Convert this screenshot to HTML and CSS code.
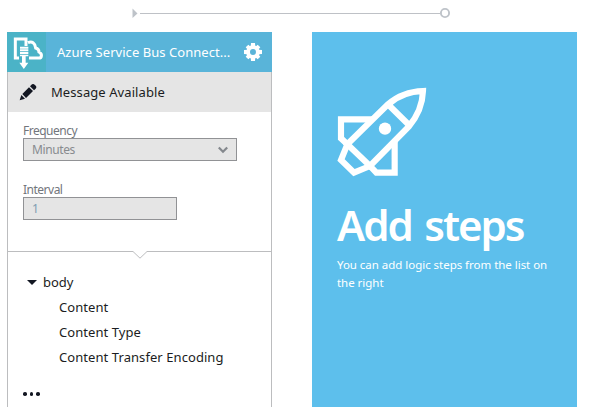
FILE: index.html
```html
<!DOCTYPE html>
<html lang="en">
<head>
<meta charset="utf-8">
<title>Logic steps</title>
<link rel="stylesheet" href="styles.css">
</head>
<body>
<svg class="flow" viewBox="0 0 589 32">
  <path d="M132.5 8.5L137.5 13.5L132.5 18Z" fill="#bec3c9"/>
  <path d="M140 13.5H440" stroke="#bec1c6"/>
  <circle cx="445" cy="13" r="4.1" fill="#fff" stroke="#bec3c9" stroke-width="1.9"/>
</svg>
<main class="board">
  <section class="card">
    <header class="head">
      <svg class="logo" viewBox="0 0 117 120">
        <rect width="117" height="120" fill="#4bb3c7"/>
        <path d="M36 78H25V21H57V42M63 32Q82 25 86 48Q96 51 96 60Q105 65 103 73Q102 78 96 78H66" fill="none" stroke="#fff" stroke-width="9"/>
        <path d="M39 44H64V50H39ZM39 52H64V58H39ZM39 60H64V66H39ZM39 68H64V73H39ZM45 73H56V92H64L50.500 111L37 92H45Z" fill="#fff"/>
      </svg>
      <span class="title">Azure Service Bus Connect...</span>
      <svg class="gear" viewBox="-9 -9 18 18">
        <g fill="#fff">
          <path id="t" d="M-2 -9H2L2.300 -5H-2.300ZM-2 9H2L2.300 5H-2.300ZM-9 -2V2L-5 2.300V-2.300ZM9 -2V2L5 2.300V-2.300Z"/>
          <use href="#t" transform="rotate(45) scale(.94)"/>
        </g>
        <circle r="4.900" fill="none" stroke="#fff" stroke-width="3.800"/>
      </svg>
    </header>
    <div class="trigger">
      <svg class="pencil" viewBox="0 0 72 72">
        <path d="M11 61L16 45L27 56ZM19 42L39 22L51 33L30 54ZM42 19L48 13Q52 10 56 14L60 18Q63 22 59 26L54 31Z" fill="#131722"/>
      </svg>
      <span class="trigger-name">Message Available</span>
    </div>
    <div class="form">
      <label class="label freq">Frequency</label>
      <div class="field select"><span>Minutes</span>
        <svg class="chev" viewBox="0 0 12 8"><path d="M1.800 1.500L6 5.800L10.200 1.500" fill="none" stroke="#84888d" stroke-width="2.200"/></svg>
      </div>
      <label class="label intv">Interval</label>
      <div class="field input"><span>1</span></div>
    </div>
    <svg class="divider" viewBox="0 0 263 9"><path d="M0 .5H125L132 7.200L139 .5H263" fill="none" stroke="#bcbdbf"/></svg>
    <div class="tree">
      <div class="node"><i class="caret"></i><span class="body">body</span></div>
      <div class="leaf content">Content</div>
      <div class="leaf type">Content Type</div>
      <div class="leaf encoding">Content Transfer Encoding</div>
    </div>
    <div class="dots"><i></i><i></i><i></i></div>
  </section>
  <section class="add">
    <svg class="rocket" viewBox="51 36 270 270">
      <g fill="none" stroke="#fff" stroke-width="18.500">
        <path d="M309 48Q247 50 204 88L82 208L150 273L266 155Q307 107 309 48ZM206 90L267 150"/>
        <path d="M158 133H63V190L82 208M224 201V293H169L150 273M82 208L63 255L102 293L150 273"/>
      </g>
      <circle cx="195" cy="161" r="18.500" fill="#fff"/>
    </svg>
    <h1>Add steps</h1>
    <p><span class="line1">You can add logic steps from the list on</span><br><span class="line2">the right</span></p>
  </section>
</main>
</body>
</html>
```
FILE: styles.css
```css
* { box-sizing: border-box; }
body {
  margin: 0;
  width: 589px;
  height: 407px;
  overflow: hidden;
  background: #fff;
  color: #1b1d22;
  font-family: "Noto Sans", "Open Sans", sans-serif;
  font-size: 13px;
}
svg { display: block; flex: none; }
.flow { width: 589px; height: 32px; }
.board { display: flex; gap: 40px; height: 375px; padding-left: 7px; }
.card {
  width: 265px;
  border: solid #bcbdbf;
  border-width: 0 1px;
}
.head {
  display: flex;
  align-items: center;
  height: 40px;
  margin: 0 -1px;
  background: #59b4d9;
  color: #fff;
  white-space: nowrap;
}
.logo { width: 39px; height: 40px; }
.title { width: 187px; padding-left: 11px; font-size: 13px; letter-spacing: .05px; }
.gear { width: 18px; height: 18px; margin-left: 11px; }
.trigger {
  display: flex;
  align-items: center;
  height: 40px;
  background: #e5e5e5;
}
.pencil { width: 24px; height: 24px; margin-left: 8px; }
.trigger-name { margin-left: 11px; letter-spacing: .08px; }
.form { height: 139px; padding: 11px 0 0 15px; }
.label { display: block; height: 15px; line-height: 16px; font-size: 12px; letter-spacing: -.5px; color: #72767c; }
.field {
  display: flex;
  align-items: center;
  justify-content: space-between;
  height: 23px;
  padding: 0 7px 0 8px;
  border: 1px solid #919295;
  background: #e5e5e5;
  color: #888b8f;
  font-size: 12px;
  letter-spacing: -.4px;
}
.select { width: 214px; }
.input { width: 154px; color: #809db2; }
.intv { margin-top: 21px; }
.chev { width: 12px; height: 8px; }
.divider { width: 263px; height: 9px; }
.tree { padding-top: 10px; line-height: 25px; white-space: nowrap; }
.node { display: flex; align-items: center; height: 25px; padding-left: 19px; }
.caret { border: solid transparent; border-width: 5px 5px 0; border-top-color: #131722; }
.body { margin-left: 6px; }
.leaf { height: 25px; padding-left: 51px; letter-spacing: .07px; }
.dots { display: flex; gap: 3px; padding: 22px 0 0 15px; }
.dots i { width: 3.500px; height: 3.500px; border-radius: 50%; background: #131722; }
.add { width: 265px; padding: 55px 0 0 25px; background: #5dbfec; color: #fff; white-space: nowrap; }
.rocket { width: 90px; height: 90px; }
h1 { margin: 22px 0 0; font-size: 42px; line-height: 52px; font-weight: 600; letter-spacing: -2px; word-spacing: 3.500px; }
p { margin: 5px 0 0; font-size: 11.500px; line-height: 18px; letter-spacing: -.03px; }
```
